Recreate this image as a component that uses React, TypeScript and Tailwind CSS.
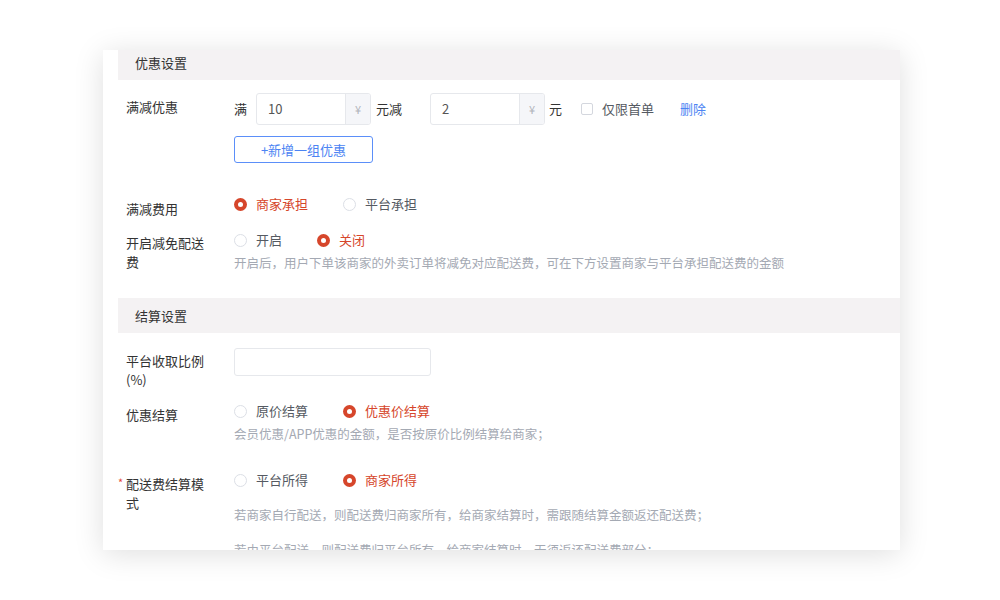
import React from "react";

const FONT = { fontFamily: '"Noto Sans CJK SC", "Noto Sans", sans-serif' };

function Radio({ label, checked }: { label: string; checked?: boolean }) {
  return (
    <div className="flex items-center h-[20px] mr-[35px]">
      {checked ? (
        <span className="w-[13px] h-[13px] rounded-full bg-[#d6462b] flex items-center justify-center">
          <span className="w-[5px] h-[5px] rounded-full bg-white" />
        </span>
      ) : (
        <span className="w-[13px] h-[13px] rounded-full border border-[#dcdfe6] bg-white" />
      )}
      <span className={"ml-[9px] text-[13px] " + (checked ? "text-[#d6462b]" : "text-[#555a62]")}>{label}</span>
    </div>
  );
}

function Label({ children, star, pt }: { children: React.ReactNode; star?: boolean; pt: string }) {
  return (
    <div className={"w-[108px] shrink-0 relative " + pt}>
      {star && <span className="absolute left-[-8px] top-[6px] text-[#e5483a] text-[11px] leading-[13px]">*</span>}
      <div className="w-[84px] text-[13px] leading-[19px] text-[#333]">{children}</div>
    </div>
  );
}

function Help({ children, mt }: { children: React.ReactNode; mt: string }) {
  return <div className={"text-[12.5px] leading-[20px] text-[#a4a9b3] whitespace-nowrap " + mt}>{children}</div>;
}

function Header({ title, mt }: { title: string; mt: string }) {
  return (
    <div className={"h-[35px] bg-[#f4f2f3] pl-[17px] flex items-center text-[13px] text-[#333] " + mt}>{title}</div>
  );
}

function MoneyInput({ value }: { value: string }) {
  return (
    <div className="w-[115px] h-[32px] border border-[#e6e8ec] rounded-[3px] flex overflow-hidden bg-white">
      <div className="flex-1 pl-[11px] flex items-center text-[13px] text-[#555]">{value}</div>
      <div className="w-[25px] bg-[#f5f6f9] border-l border-[#e6e8ec] flex items-center justify-center text-[11px] text-[#b0b3ba]">¥</div>
    </div>
  );
}

export default function App() {
  return (
    <div className="w-[1000px] h-[600px] bg-white pt-[50px] pl-[103px]" style={FONT}>
      <div className="w-[797px] h-[500px] overflow-hidden bg-white pl-[15px] shadow-[0_4px_28px_rgba(0,0,0,0.13)]">
        <div className="-mt-[5px]">
          <Header title="优惠设置" mt="" />
        </div>
        <div className="pl-[8px]">
          {/* 满减优惠 */}
          <div className="flex mt-[13px]">
            <Label pt="pt-[4px]">满减优惠</Label>
            <div className="flex flex-col">
              <div className="flex items-center text-[13px] text-[#333]">
                <span>满</span>
                <div className="ml-[9px]">
                  <MoneyInput value="10" />
                </div>
                <span className="ml-[5px]">元减</span>
                <div className="ml-[28px]">
                  <MoneyInput value="2" />
                </div>
                <span className="ml-[4px]">元</span>
                <span className="ml-[19px] w-[12px] h-[12px] border border-[#d4d7de] rounded-[2px] bg-white" />
                <span className="ml-[9px] text-[#555a62]">仅限首单</span>
                <span className="ml-[26px] text-[#4c84f3]">删除</span>
              </div>
              <button className="mt-[11px] w-[139px] h-[27px] border border-[#5b8ff9] rounded-[3px] text-[13px] text-[#4c84f3] bg-white">
                +新增一组优惠
              </button>
            </div>
          </div>

          {/* 满减费用 */}
          <div className="flex mt-[31px]">
            <Label pt="pt-[5px]">满减费用</Label>
            <div className="flex">
              <Radio label="商家承担" checked />
              <Radio label="平台承担" />
            </div>
          </div>

          {/* 开启减免配送费 */}
          <div className="flex mt-[12px]">
            <Label pt="pt-[3px]">开启减免配送费</Label>
            <div className="flex flex-col">
              <div className="flex">
                <Radio label="开启" />
                <Radio label="关闭" checked />
              </div>
              <Help mt="mt-[3px]">开启后，用户下单该商家的外卖订单将减免对应配送费，可在下方设置商家与平台承担配送费的金额</Help>
            </div>
          </div>
        </div>

        <Header title="结算设置" mt="mt-[25px]" />

        <div className="pl-[8px]">
          {/* 平台收取比例 */}
          <div className="flex mt-[15px]">
            <Label pt="pt-[3px]">平台收取比例(%)</Label>
            <div className="w-[197px] h-[28px] border border-[#e6e8ec] rounded-[3px] bg-white" />
          </div>

          {/* 优惠结算 */}
          <div className="flex mt-[12px]">
            <Label pt="pt-[4px]">优惠结算</Label>
            <div className="flex flex-col">
              <div className="flex">
                <Radio label="原价结算" />
                <Radio label="优惠价结算" checked />
              </div>
              <Help mt="mt-[3px]">会员优惠/APP优惠的金额，是否按原价比例结算给商家；</Help>
            </div>
          </div>

          {/* 配送费结算模式 */}
          <div className="flex mt-[26px]">
            <Label pt="pt-[4px]" star>
              配送费结算模式
            </Label>
            <div className="flex flex-col">
              <div className="flex">
                <Radio label="平台所得" />
                <Radio label="商家所得" checked />
              </div>
              <Help mt="mt-[15px]">若商家自行配送，则配送费归商家所有，给商家结算时，需跟随结算金额返还配送费；</Help>
              <Help mt="mt-[15px]">若由平台配送，则配送费归平台所有，给商家结算时，无须返还配送费部分；</Help>
            </div>
          </div>
        </div>
      </div>
    </div>
  );
}
